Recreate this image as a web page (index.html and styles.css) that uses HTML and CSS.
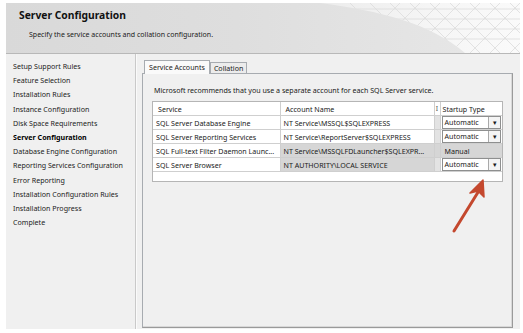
FILE: index.html
```html
<!doctype html>
<html>
  <head>
    <title>Server Configuration</title>
    <meta charset="utf-8">
    <link rel="stylesheet" href="styles.css">
  </head>
  <body>
    <div class="window">
      <div class="header">
        <svg class="mesh" width="230" height="50" viewBox="0 0 230 50">
          <defs>
            <linearGradient id="sweep" x1="0" y1="0" x2="1" y2="0">
              <stop offset="0" stop-color="#ececec"/>
              <stop offset="0.6" stop-color="#f6f6f6"/>
              <stop offset="1" stop-color="#fafafa"/>
            </linearGradient>
            <clipPath id="wave">
              <path d="M30 0 C90 8 140 20 175 50 L230 50 L230 0 Z"/>
            </clipPath>
          </defs>
          <path d="M30 0 C90 8 140 20 175 50 L230 50 L230 0 Z" fill="url(#sweep)"/>
          <g clip-path="url(#wave)" stroke="#dcdcdc" stroke-width="0.8" fill="none">
            <path d="M60 0 L110 50 M80 0 L130 50 M100 0 L150 50 M120 0 L170 50 M140 0 L190 50 M160 0 L210 50 M180 0 L230 50 M200 0 L250 50 M220 0 L270 50"/>
            <path d="M110 0 L60 50 M130 0 L80 50 M150 0 L100 50 M170 0 L120 50 M190 0 L140 50 M210 0 L160 50 M230 0 L180 50 M250 0 L200 50 M270 0 L220 50"/>
            <path d="M40 6 L230 6 M40 16 L230 16 M40 26 L230 26 M40 36 L230 36"/>
          </g>
        </svg>
        <h1>Server Configuration</h1>
        <p>Specify the service accounts and collation configuration.</p>
      </div>
      <div class="main">
        <ul class="steps">
          <li>Setup Support Rules</li>
          <li>Feature Selection</li>
          <li>Installation Rules</li>
          <li>Instance Configuration</li>
          <li>Disk Space Requirements</li>
          <li class="current">Server Configuration</li>
          <li>Database Engine Configuration</li>
          <li>Reporting Services Configuration</li>
          <li>Error Reporting</li>
          <li>Installation Configuration Rules</li>
          <li>Installation Progress</li>
          <li>Complete</li>
        </ul>
        <div class="content">
          <div class="tabs">
            <div class="tab active">Service Accounts</div>
            <div class="tab">Collation</div>
          </div>
          <div class="panel">
            <p class="intro">Microsoft recommends that you use a separate account for each SQL Server service.</p>
            <div class="list">
              <table>
                <colgroup>
                  <col class="w-service">
                  <col class="w-account">
                  <col class="w-sep">
                  <col class="w-type">
                </colgroup>
                <tr class="head">
                  <td>Service</td>
                  <td>Account Name</td>
                  <td class="c-sep">I</td>
                  <td class="c-type">Startup Type</td>
                </tr>
                <tr>
                  <td>SQL Server Database Engine</td>
                  <td>NT Service\MSSQL$SQLEXPRESS</td>
                  <td class="c-sep"></td>
                  <td class="c-type"><div class="combo"><span>Automatic</span><b>&#9662;</b></div></td>
                </tr>
                <tr>
                  <td>SQL Server Reporting Services</td>
                  <td>NT Service\ReportServer$SQLEXPRESS</td>
                  <td class="c-sep"></td>
                  <td class="c-type"><div class="combo"><span>Automatic</span><b>&#9662;</b></div></td>
                </tr>
                <tr class="locked">
                  <td>SQL Full-text Filter Daemon Launc...</td>
                  <td class="grey">NT Service\MSSQLFDLauncher$SQLEXPR...</td>
                  <td class="c-sep"></td>
                  <td class="c-type grey"><span class="plain">Manual</span></td>
                </tr>
                <tr>
                  <td>SQL Server Browser</td>
                  <td class="grey">NT AUTHORITY\LOCAL SERVICE</td>
                  <td class="c-sep"></td>
                  <td class="c-type"><div class="combo"><span>Automatic</span><b>&#9662;</b></div></td>
                </tr>
              </table>
            </div>
          </div>
        </div>
      </div>
      <svg class="arrow" width="50" height="70" viewBox="0 0 50 70">
        <path d="M12 56 L38 14" stroke="#c4482e" stroke-width="3" stroke-linecap="round" fill="none"/>
        <path d="M41 5 L42 22 L36 16 L28 18 Z" fill="#c4482e" stroke="#c4482e" stroke-width="1.5" stroke-linejoin="round"/>
      </svg>
    </div>
  </body>
</html>
```

FILE: styles.css
```css
html, body {
  margin: 0;
  padding: 0;
  background: #fff;
  font-family: "Noto Sans", "Open Sans", sans-serif;
  font-size: 7.1px;
  color: #1a1a1a;
}

.window {
  position: relative;
  width: 514px;
  height: 326px;
  margin: 3px 0 0 6px;
  background: #f0f0f0;
  display: flex;
  flex-direction: column;
}

/* header band */
.header {
  position: relative;
  height: 50px;
  flex: none;
  background: linear-gradient(to right, #d9d9d9, #dedede 45%, #e8e8e8);
  border-bottom: 1px solid #b8b8b8;
  overflow: hidden;
}
.header .mesh {
  position: absolute;
  right: 0;
  top: 0;
}
.header h1 {
  position: relative;
  margin: 0;
  padding: 4px 0 0 13px;
  font-size: 10.3px;
  font-weight: bold;
  line-height: 16px;
  color: #111;
}
.header p {
  position: relative;
  margin: 7px 0 0 23px;
  font-size: 7px;
  line-height: 10px;
}

.main {
  flex: 1;
  display: flex;
}

/* step list */
.steps {
  flex: none;
  list-style: none;
  margin: 0;
  padding: 5px 0 0 7px;
  width: 122px;
  border-right: 1px solid #c9c9c9;
  box-shadow: 1px 0 0 #fafafa;
}
.steps li {
  line-height: 14.2px;
  white-space: nowrap;
  color: #222;
}
.steps li.current {
  font-weight: bold;
  color: #000;
}

/* tabs */
.content {
  flex: 1;
  min-width: 0;
  display: flex;
  flex-direction: column;
  padding: 7px 7px 1px 6px;
}
.tabs {
  display: flex;
  align-items: flex-end;
  height: 12px;
  padding-left: 2px;
  position: relative;
  z-index: 1;
}
.tab {
  height: 10px;
  line-height: 10px;
  padding: 0 3px;
  border: 1px solid #a7abb0;
  border-bottom: none;
  background: #ececec;
  white-space: nowrap;
}
.tab.active {
  height: 13px;
  line-height: 12px;
  background: #fafafa;
  margin-bottom: -1px;
  padding: 0 4px;
}
.panel {
  flex: 1;
  background: #f0f0f0;
  border: 1px solid #a7abb0;
  border-right-color: #9a9a9a;
  border-bottom-color: #9a9a9a;
  box-shadow: inset -1px -1px 0 #d8d8d8;
  padding: 11px 7px 0 9px;
}
.intro {
  margin: 0 0 5px 2px;
  line-height: 11px;
  white-space: nowrap;
}

/* service list */
.list {
  height: 79px;
  width: 349px;
  background: #fff;
  border: 1px solid #b5b5b5;
  overflow: hidden;
}
table {
  border-collapse: collapse;
  width: 349px;
  table-layout: fixed;
}
.w-service { width: 127px; }
.w-account { width: 154px; }
.w-sep { width: 6px; }
.w-type { width: 62px; }
td {
  height: 13px;
  padding: 0 0 0 3px;
  border: 1px solid #cfcfcf;
  white-space: nowrap;
  overflow: hidden;
  line-height: 12px;
}
tr:first-child td {
  border-top: none;
}
td:first-child {
  border-left: none;
}
td:last-child {
  border-right: none;
}
.head td {
  padding-left: 5px;
  background: #fff;
  border-left-color: #fff;
}
.head td:first-child + td {
  border-left-color: #dcdcdc;
}
.c-sep {
  padding: 0;
  background: #e3e3e3;
  text-align: center;
}
.head .c-sep {
  padding: 0;
  background: #fff;
  font-size: 7px;
  color: #555;
}
.c-type {
  padding: 0 0 0 1px;
}
.head .c-type {
  padding-left: 2px;
}
.grey {
  background: #d6d6d6;
}
.locked .c-sep {
  background: #d6d6d6;
}
.plain {
  padding-left: 3px;
}
.combo {
  display: flex;
  height: 11px;
  border: 1px solid #8e8f8f;
  background: #fff;
  margin-right: 1px;
}
.combo span {
  flex: 1;
  line-height: 11px;
  padding-left: 2px;
}
.combo b {
  width: 11px;
  border-left: 1px solid #a9a9a9;
  background: #f4f4f4;
  font-size: 7px;
  line-height: 11px;
  text-align: center;
  font-weight: normal;
}

/* annotation drawn over the screenshot */
.arrow {
  position: absolute;
  left: 436px;
  top: 172px;
}
```
